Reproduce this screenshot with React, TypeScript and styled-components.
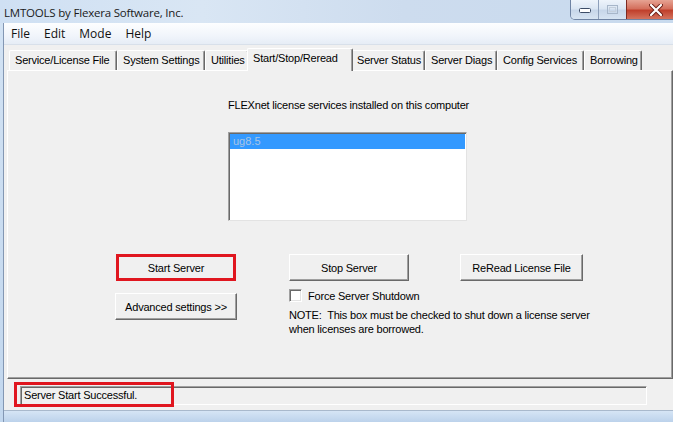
import React from "react";
import styled, { createGlobalStyle } from "styled-components";

const GlobalStyle = createGlobalStyle`
  html, body {
    margin: 0;
    padding: 0;
    width: 673px;
    height: 422px;
    overflow: hidden;
    background: #c4d8ee;
  }
`;

const UI_FONT = `"Liberation Sans", Arial, sans-serif`;
const SHELL_FONT = `"Open Sans", "Noto Sans", sans-serif`;

const Window = styled.div`
  width: 673px;
  height: 422px;
  display: flex;
  flex-direction: column;
  overflow: hidden;
  background: linear-gradient(180deg, #d3e3f4 0%, #c2d7ee 100%);
`;

const TitleBar = styled.div`
  height: 23px;
  flex: none;
  display: flex;
  align-items: flex-start;
  justify-content: space-between;
  background: linear-gradient(90deg, #cfe0f3 0%, #d9e6f4 30%, #cddcee 60%, #c8daee 100%);
`;

const Title = styled.div`
  font-family: ${SHELL_FONT};
  font-size: 11.5px;
  color: #1a1a1a;
  padding: 5px 0 0 4px;
  letter-spacing: -0.2px;
`;

const ControlBox = styled.div`
  display: flex;
  height: 19px;
  margin-right: -12px;
  border: 1px solid #6f83a3;
  border-top: none;
  border-radius: 0 0 0 5px;
  overflow: hidden;
`;

const CaptionButton = styled.div<{ $w: number; $close?: boolean }>`
  width: ${(p) => p.$w}px;
  height: 19px;
  display: flex;
  align-items: center;
  justify-content: center;
  border-left: ${(p) => (p.$close ? "1px solid #7d2a22" : "1px solid #8d9fba")};
  background: ${(p) =>
    p.$close
      ? "linear-gradient(180deg, #e6a393 0%, #d4705d 45%, #c0402c 55%, #d3735e 100%)"
      : "linear-gradient(180deg, #eef4fb 0%, #dbe6f3 45%, #c7d6e9 55%, #d7e4f2 100%)"};
  &:first-child {
    border-left: none;
  }
`;

const Frame = styled.div`
  flex: 1;
  display: flex;
  flex-direction: column;
  margin-left: 3px;
  border-left: 1px solid #8397b3;
  min-height: 0;
`;

const MenuBar = styled.div`
  height: 21px;
  flex: none;
  display: flex;
  align-items: center;
  gap: 14px;
  padding-left: 7px;
  background: linear-gradient(180deg, #fdfeff 0%, #f1f5fb 60%, #e6edf6 100%);
  border-bottom: 1px solid #d8e0ea;
`;

const MenuItem = styled.span`
  font-family: ${SHELL_FONT};
  font-size: 12px;
  color: #111;
`;

const Client = styled.div`
  flex: 1;
  display: flex;
  flex-direction: column;
  background: #f0f0f0;
  padding: 2px 0 0 3px;
  min-height: 0;
`;

const TabRow = styled.div`
  display: flex;
  align-items: flex-end;
  height: 23px;
  padding-left: 2px;
  position: relative;
  z-index: 1;
`;

const Tab = styled.div<{ $w: number; $active?: boolean }>`
  box-sizing: border-box;
  width: ${(p) => p.$w + (p.$active ? 4 : 0)}px;
  height: ${(p) => (p.$active ? 23 : 20)}px;
  margin: ${(p) => (p.$active ? "0 -2px -1px -2px" : "0")};
  padding: 3px 0 0 5px;
  font-family: ${UI_FONT};
  font-size: 11px;
  letter-spacing: -0.2px;
  color: #000;
  white-space: nowrap;
  background: #f0f0f0;
  border-top: 1px solid #fff;
  border-left: 1px solid #fff;
  border-right: 1px solid #696969;
  box-shadow: inset -1px 0 0 #a0a0a0;
  border-radius: 2px 2px 0 0;
  position: relative;
  z-index: ${(p) => (p.$active ? 2 : 0)};
`;

const Panel = styled.div`
  box-sizing: border-box;
  height: 309px;
  flex: none;
  display: flex;
  flex-direction: column;
  border-top: 1px solid #fff;
  border-left: 1px solid #fff;
  border-right: 1px solid #696969;
  border-bottom: 1px solid #696969;
  box-shadow: inset -1px -1px 0 #a0a0a0;
`;

const ServiceBlock = styled.div`
  margin: 28px 0 0 220px;
  width: 240px;
  display: flex;
  flex-direction: column;
`;

const Caption = styled.div`
  font-family: ${UI_FONT};
  font-size: 11px;
  letter-spacing: -0.2px;
  line-height: 13px;
  color: #000;
  white-space: nowrap;
`;

const ListBox = styled.div`
  box-sizing: border-box;
  margin-top: 20px;
  width: 239px;
  height: 89px;
  background: #fff;
  border-top: 1px solid #a0a0a0;
  border-left: 1px solid #a0a0a0;
  border-right: 1px solid #e3e3e3;
  border-bottom: 1px solid #e3e3e3;
  box-shadow: inset 1px 1px 0 #696969;
  padding: 1px 1px 0 1px;
`;

const ListItem = styled.div<{ $selected?: boolean }>`
  height: 15px;
  line-height: 15px;
  padding-left: 3px;
  font-family: ${UI_FONT};
  font-size: 11px;
  color: ${(p) => (p.$selected ? "#a9c4e4" : "#000")};
  background: ${(p) => (p.$selected ? "#3399ff" : "transparent")};
`;

const Controls = styled.div`
  margin: 33px 0 0 108px;
  display: grid;
  grid-template-columns: 173px 171px 123px;
  grid-template-rows: 27px auto;
  row-gap: 8px;
`;

const Button = styled.div<{ $w: number; $marked?: boolean }>`
  box-sizing: border-box;
  width: ${(p) => p.$w}px;
  height: 27px;
  display: flex;
  align-items: center;
  justify-content: center;
  font-family: ${UI_FONT};
  font-size: 11px;
  letter-spacing: -0.2px;
  color: #000;
  background: #f0f0f0;
  border-top: 1px solid #fff;
  border-left: 1px solid #fff;
  border-right: 1px solid #696969;
  border-bottom: 1px solid #696969;
  box-shadow: inset -1px -1px 0 #a0a0a0;
  ${(p) =>
    p.$marked &&
    `
    border: 3px solid #e0161f;
    box-shadow: none;
  `}
`;

const AdvancedCell = styled.div`
  padding-top: 4px;
  margin-left: -1px;
`;

const OptionCell = styled.div`
  grid-column: 2 / span 2;
  display: flex;
  flex-direction: column;
  white-space: nowrap;
`;

const CheckRow = styled.label`
  display: flex;
  align-items: center;
  gap: 6px;
  height: 13px;
  font-family: ${UI_FONT};
  font-size: 11px;
  letter-spacing: -0.2px;
  color: #000;
`;

const CheckBox = styled.span`
  box-sizing: border-box;
  width: 13px;
  height: 13px;
  background: #fff;
  border-top: 1px solid #a0a0a0;
  border-left: 1px solid #a0a0a0;
  border-right: 1px solid #fff;
  border-bottom: 1px solid #fff;
  box-shadow: inset 1px 1px 0 #696969, inset -1px -1px 0 #e3e3e3;
`;

const Note = styled.div`
  margin-top: 6px;
  font-family: ${UI_FONT};
  font-size: 11px;
  letter-spacing: -0.2px;
  line-height: 14px;
  color: #000;
`;

const StatusArea = styled.div`
  flex: 1;
  padding: 7px 0 0 13px;
`;

const StatusField = styled.div`
  position: relative;
  box-sizing: border-box;
  width: 627px;
  height: 19px;
  padding: 2px 0 0 3px;
  font-family: ${UI_FONT};
  font-size: 11px;
  letter-spacing: -0.2px;
  color: #000;
  border-top: 1px solid #a0a0a0;
  border-left: 1px solid #a0a0a0;
  border-right: 1px solid #fff;
  border-bottom: 1px solid #fff;
  box-shadow: inset 1px 1px 0 #696969;
`;

const Annotation = styled.div`
  position: absolute;
  left: -7px;
  top: -5px;
  width: 160px;
  height: 25px;
  box-sizing: border-box;
  border: 3px solid #e0161f;
  pointer-events: none;
`;

const BottomEdge = styled.div`
  height: 11px;
  flex: none;
  border-top: 1px solid #a9b9cc;
  background: linear-gradient(180deg, #d6e5f5 0%, #bcd2eb 100%);
`;

const tabs = [
  { label: "Service/License File", w: 108 },
  { label: "System Settings", w: 88 },
  { label: "Utilities", w: 44 },
  { label: "Start/Stop/Reread", w: 102, active: true },
  { label: "Server Status", w: 74 },
  { label: "Server Diags", w: 72 },
  { label: "Config Services", w: 87 },
  { label: "Borrowing", w: 58 },
];

const MinimizeIcon = () => (
  <svg width="12" height="6" viewBox="0 0 12 6">
    <rect x="0.5" y="1.5" width="11" height="4" rx="1" fill="#fff" stroke="#3c4c66" />
  </svg>
);

const MaximizeIcon = () => (
  <svg width="11" height="9" viewBox="0 0 11 9">
    <rect x="0.5" y="0.5" width="10" height="8" fill="none" stroke="#a7b6c9" />
    <rect x="2.5" y="2.5" width="6" height="4" fill="none" stroke="#c4cfdc" />
  </svg>
);

const CloseIcon = () => (
  <svg width="14" height="12" viewBox="0 0 14 12">
    <path d="M2 1 L12 11 M12 1 L2 11" stroke="#6b1f16" strokeWidth="4" strokeLinecap="round" />
    <path d="M2 1 L12 11 M12 1 L2 11" stroke="#fff" strokeWidth="2.2" strokeLinecap="round" />
  </svg>
);

export default function App() {
  return (
    <>
      <GlobalStyle />
      <Window>
        <TitleBar>
          <Title>LMTOOLS by Flexera Software, Inc.</Title>
          <ControlBox>
            <CaptionButton $w={27}>
              <MinimizeIcon />
            </CaptionButton>
            <CaptionButton $w={27}>
              <MaximizeIcon />
            </CaptionButton>
            <CaptionButton $w={57} $close>
              <CloseIcon />
            </CaptionButton>
          </ControlBox>
        </TitleBar>
        <Frame>
          <MenuBar>
            <MenuItem>File</MenuItem>
            <MenuItem>Edit</MenuItem>
            <MenuItem>Mode</MenuItem>
            <MenuItem>Help</MenuItem>
          </MenuBar>
          <Client>
            <TabRow>
              {tabs.map((t) => (
                <Tab key={t.label} $w={t.w} $active={t.active}>
                  {t.label}
                </Tab>
              ))}
            </TabRow>
            <Panel>
              <ServiceBlock>
                <Caption>FLEXnet license services installed on this computer</Caption>
                <ListBox>
                  <ListItem $selected>ug8.5</ListItem>
                </ListBox>
              </ServiceBlock>
              <Controls>
                <Button $w={120} $marked>
                  Start Server
                </Button>
                <Button $w={120}>Stop Server</Button>
                <Button $w={123}>ReRead License File</Button>
                <AdvancedCell>
                  <Button $w={122}>Advanced settings &gt;&gt;</Button>
                </AdvancedCell>
                <OptionCell>
                  <CheckRow>
                    <CheckBox />
                    Force Server Shutdown
                  </CheckRow>
                  <Note>
                    NOTE:&nbsp; This box must be checked to shut down a license server
                    <br />
                    when licenses are borrowed.
                  </Note>
                </OptionCell>
              </Controls>
            </Panel>
            <StatusArea>
              <StatusField>
                Server Start Successful.
                <Annotation />
              </StatusField>
            </StatusArea>
          </Client>
          <BottomEdge />
        </Frame>
      </Window>
    </>
  );
}
